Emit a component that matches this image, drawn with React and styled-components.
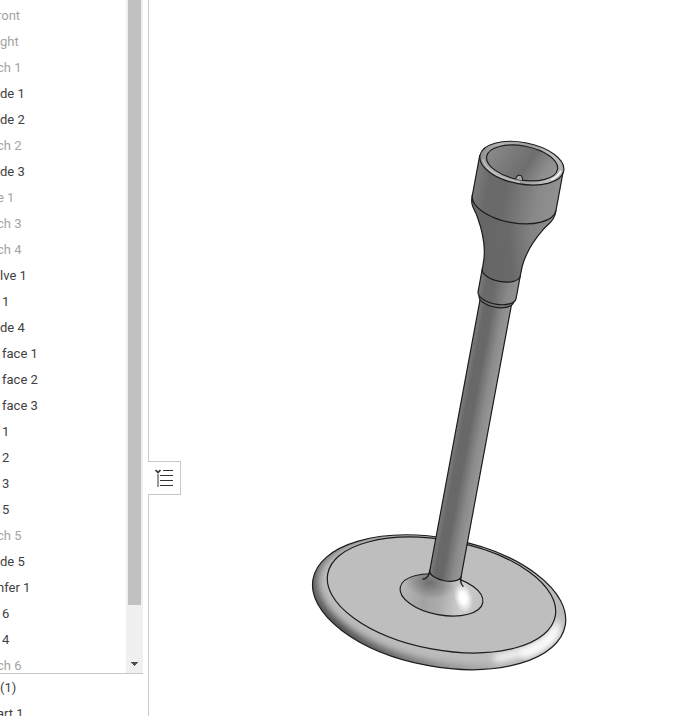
import styled, { createGlobalStyle } from 'styled-components';

const features = [
  { label: 'ront', muted: true, start: -3 },
  { label: 'ght', muted: true },
  { label: 'ch 1', muted: true, start: -3 },
  { label: 'de 1' },
  { label: 'de 2' },
  { label: 'ch 2', muted: true, start: -3 },
  { label: 'de 3' },
  { label: 'e 1', muted: true, start: -3 },
  { label: 'ch 3', muted: true, start: -3 },
  { label: 'ch 4', muted: true, start: -3 },
  { label: 'lve 1' },
  { label: '1', start: 2 },
  { label: 'de 4' },
  { label: 'face 1', start: 2 },
  { label: 'face 2', start: 2 },
  { label: 'face 3', start: 2 },
  { label: '1', start: 2 },
  { label: '2', start: 2 },
  { label: '3', start: 2 },
  { label: '5', start: 2 },
  { label: 'ch 5', muted: true, start: -3 },
  { label: 'de 5' },
  { label: 'nfer 1', start: -3 },
  { label: '6', start: 2 },
  { label: '4', start: 2 },
  { label: 'ch 6', muted: true, start: -3 },
];

const parts = [{ label: '(1)' }, { label: 'art 1', start: -3 }];

const App = () => {
  return (
    <>
      <GlobalStyle />
      <Page>
        <Sidebar>
          <TreePanel>
            <List>
              {features.map((item, i) => (
                <Row key={i} $muted={item.muted} $start={item.start}>
                  {item.label}
                </Row>
              ))}
            </List>
            <Scrollbar>
              <Thumb />
              <ScrollDown type="button" aria-label="Scroll down">
                <svg width="7" height="4" shapeRendering="crispEdges">
                  <path d="M0 0h7v1h-1v1h-1v1h-1v1h-1v-1h-1v-1h-1v-1h-1z" fill="#505050" />
                </svg>
              </ScrollDown>
            </Scrollbar>
          </TreePanel>
          <PartsPanel>
            {parts.map((item) => (
              <Row key={item.label} $start={item.start}>
                {item.label}
              </Row>
            ))}
          </PartsPanel>
        </Sidebar>
        <Viewport>
          <ListToggle type="button" aria-label="Toggle feature list">
            <ListIcon />
          </ListToggle>
          <Model />
        </Viewport>
      </Page>
    </>
  );
};

const ListIcon = () => (
  <svg width="20" height="20" viewBox="0 0 20 20" fill="none">
    <path d="M1.5 2l2.5 2.5L6.5 2" stroke="#333" strokeWidth="1.7" />
    <path d="M4 6v13" stroke="#999" strokeWidth="2" />
    <path d="M9 2.5h10M6 7.5h13M6 12.5h13M6 17.5h13" stroke="#333" />
  </svg>
);

// The solid is drawn upright around the centre of the base, then tilted.
const Model = () => (
  <Drawing viewBox="149 0 543 716" preserveAspectRatio="xMinYMin meet" aria-hidden="true">
    <defs>
      <linearGradient id="stem">
        <stop offset="0" stopColor="#7d7d7d" />
        <stop offset="0.18" stopColor="#686868" />
        <stop offset="0.42" stopColor="#686868" />
        <stop offset="0.75" stopColor="#8b8b8b" />
        <stop offset="1" stopColor="#989898" />
      </linearGradient>
      <linearGradient id="cup">
        <stop offset="0" stopColor="#7c7c7c" />
        <stop offset="0.16" stopColor="#6a6a6a" />
        <stop offset="0.38" stopColor="#6a6a6a" />
        <stop offset="0.75" stopColor="#888" />
        <stop offset="1" stopColor="#929292" />
      </linearGradient>
      <linearGradient id="neck" x1="0" y1="0.5" x2="1" y2="0.25">
        <stop offset="0" stopColor="#747474" />
        <stop offset="0.2" stopColor="#666" />
        <stop offset="0.5" stopColor="#696969" />
        <stop offset="0.75" stopColor="#828282" />
        <stop offset="1" stopColor="#8c8c8c" />
      </linearGradient>
      <linearGradient id="bore" x1="0" y1="0.3" x2="1" y2="0.5">
        <stop offset="0" stopColor="#8c8c8c" />
        <stop offset="0.3" stopColor="#7b7b7b" />
        <stop offset="0.6" stopColor="#6e6e6e" />
        <stop offset="0.85" stopColor="#8c8c8c" />
        <stop offset="1" stopColor="#959595" />
      </linearGradient>
      <linearGradient id="lip">
        <stop offset="0" stopColor="#8d8d8d" />
        <stop offset="0.2" stopColor="#b5b5b5" />
        <stop offset="0.55" stopColor="#9c9c9c" />
        <stop offset="0.85" stopColor="#c4c4c4" />
        <stop offset="1" stopColor="#a8a8a8" />
      </linearGradient>
      <radialGradient id="edgeShade" gradientUnits="userSpaceOnUse" cx="-95" cy="45" r="170">
        <stop offset="0" stopColor="#4c4c4c" />
        <stop offset="0.3" stopColor="#606060" />
        <stop offset="0.65" stopColor="#8c8c8c" />
        <stop offset="1" stopColor="#b4b4b4" />
      </radialGradient>
      <linearGradient id="flare">
        <stop offset="0" stopColor="#b8b8b8" />
        <stop offset="0.3" stopColor="#a2a2a2" />
        <stop offset="0.5" stopColor="#acacac" />
        <stop offset="0.75" stopColor="#cfcfcf" />
        <stop offset="1" stopColor="#bebebe" />
      </linearGradient>
      <radialGradient id="flareShadow">
        <stop offset="0" stopColor="#707070" />
        <stop offset="1" stopColor="#707070" stopOpacity="0" />
      </radialGradient>
      <radialGradient id="glint">
        <stop offset="0" stopColor="#fff" />
        <stop offset="0.35" stopColor="#fff" />
        <stop offset="1" stopColor="#fff" stopOpacity="0" />
      </radialGradient>
      <filter id="soft" x="-20%" y="-20%" width="140%" height="140%">
        <feGaussianBlur stdDeviation="3.5" />
      </filter>
      <clipPath id="discClip">
        <ellipse cx="-1" cy="7.6" rx="128.2" ry="64.2" />
      </clipPath>
      <clipPath id="flareClip">
        <ellipse rx="42" ry="19.9" />
      </clipPath>
      <clipPath id="boreClip">
        <ellipse cx="0.5" cy="-439.5" rx="36" ry="17" />
      </clipPath>
    </defs>
    <g transform="translate(441.5 595) rotate(10.5)" stroke="#1c1c1c" strokeWidth="1.2" fill="none">
      <g clipPath="url(#discClip)" stroke="none">
        <ellipse cx="-1" cy="7.6" rx="129" ry="65" fill="#bcbcbc" />
        <ellipse cx="1" cy="4" rx="132" ry="69" stroke="url(#edgeShade)" strokeWidth="13" filter="url(#soft)" />
        <path d="M119 8C118 24 100 39 66 52" stroke="#fff" strokeWidth="7" strokeLinecap="round" filter="url(#soft)" />
        <path d="M119 16C114 28 106 36 92 43" stroke="#fff" strokeWidth="8" strokeLinecap="round" filter="url(#soft)" />
      </g>
      <ellipse cx="-1" cy="7.6" rx="128.2" ry="64.2" />
      <ellipse rx="115.7" ry="54.8" fill="#bebebe" />

      <ellipse rx="42" ry="19.9" fill="url(#flare)" />
      <g clipPath="url(#flareClip)" stroke="none">
        <ellipse cx="-14" cy="-10" rx="26" ry="16" fill="url(#flareShadow)" />
        <ellipse cx="22" cy="-1" rx="9" ry="15" fill="url(#glint)" transform="rotate(-25 22 -1)" />
      </g>
      <path d="M-15.9 -23C-15.9 -18 -16 -14 -21.5 -12M15.9 -23C15.9 -18 16 -15 20 -12" strokeWidth="1.4" />
      <path d="M-15.9 -303V-22A15.9 7.5 0 0 0 15.9 -22V-303Z" fill="url(#stem)" />

      <path d="M-17.5 -303V-301A17.5 8.3 0 0 0 17.5 -301V-303Z" fill="#777" />
      <path d="M-19.3 -328V-305A19.3 9.1 0 0 0 19.3 -305V-328Z" fill="url(#cup)" />
      <path
        d="M-42.5 -399C-43 -388 -38 -386 -33.5 -378C-27 -367 -20.5 -352 -19.5 -338L-19.3 -328A19.3 9.1 0 0 0 19.3 -328L19.5 -338C20.5 -352 27 -367 33.5 -378C38 -386 43 -388 42.5 -399Z"
        fill="url(#neck)"
      />
      <path d="M-42.5 -439V-399A42.5 20.1 0 0 0 42.5 -399V-439Z" fill="url(#cup)" />
      <ellipse cx="0.3" cy="-439.2" rx="42.6" ry="20.8" fill="url(#lip)" />
      <path d="M-39 -436C-32 -423 -16 -421 2 -420" stroke="#c2c2c2" />
      <path d="M33 -429C37 -432 39 -435 40 -438" stroke="#f4f4f4" strokeWidth="2" strokeLinecap="round" />
      <ellipse cx="0.5" cy="-439.5" rx="36" ry="17" fill="url(#bore)" />
      <g clipPath="url(#boreClip)">
        <path d="M-3 -421C-3 -429 4 -429 4 -421" fill="#aaa" strokeWidth="1" />
      </g>
    </g>
  </Drawing>
);

const GlobalStyle = createGlobalStyle`
  body {
    margin: 0;
    background: #fff;
    color: #404040;
    font-family: Roboto, 'Open Sans', sans-serif;
    font-size: 13px;
  }
`;

const Page = styled.main`
  display: flex;
  height: 100vh;
  overflow: hidden;
`;

const Sidebar = styled.aside`
  display: flex;
  flex-direction: column;
  flex: none;
  width: 148px;
  border-right: 1px solid #c8c8c8;
`;

const TreePanel = styled.div`
  display: flex;
  flex: 1;
  min-height: 0;
  margin-right: 5px;
  border-bottom: 1px solid #c8c8c8;
`;

const List = styled.ul`
  flex: 1;
  margin: 0;
  padding: 3px 0 0;
  list-style: none;
  overflow: hidden;
`;

const Row = styled.li`
  height: 26px;
  line-height: 26px;
  text-indent: ${(props) => props.$start || 0}px;
  white-space: nowrap;
  color: ${(props) => (props.$muted ? '#a4a4a4' : '#404040')};
`;

const PartsPanel = styled.ul`
  flex: none;
  height: 41px;
  margin: 0;
  padding: 1px 0 0;
  list-style: none;
  overflow: hidden;
`;

const Scrollbar = styled.div`
  display: flex;
  flex-direction: column;
  width: 17px;
  background: #f0f0f0;
`;

const Thumb = styled.div`
  flex: 1;
  margin: 0 2px 51px;
  background: #c1c1c1;
`;

const ScrollDown = styled.button`
  display: flex;
  align-items: flex-start;
  justify-content: center;
  height: 17px;
  padding: 6px 0 0;
  border: none;
  background: transparent;
`;

const Viewport = styled.section`
  position: relative;
  flex: 1;
  min-width: 0;
`;

const Drawing = styled.svg`
  display: block;
  width: 100%;
  height: 100%;
`;

const ListToggle = styled.button`
  position: absolute;
  top: 461px;
  left: -1px;
  display: flex;
  align-items: center;
  width: 33px;
  height: 34px;
  padding: 0 0 0 6px;
  border: 1px solid #c8c8c8;
  border-left: none;
  background: #fff;
`;

export default App;
